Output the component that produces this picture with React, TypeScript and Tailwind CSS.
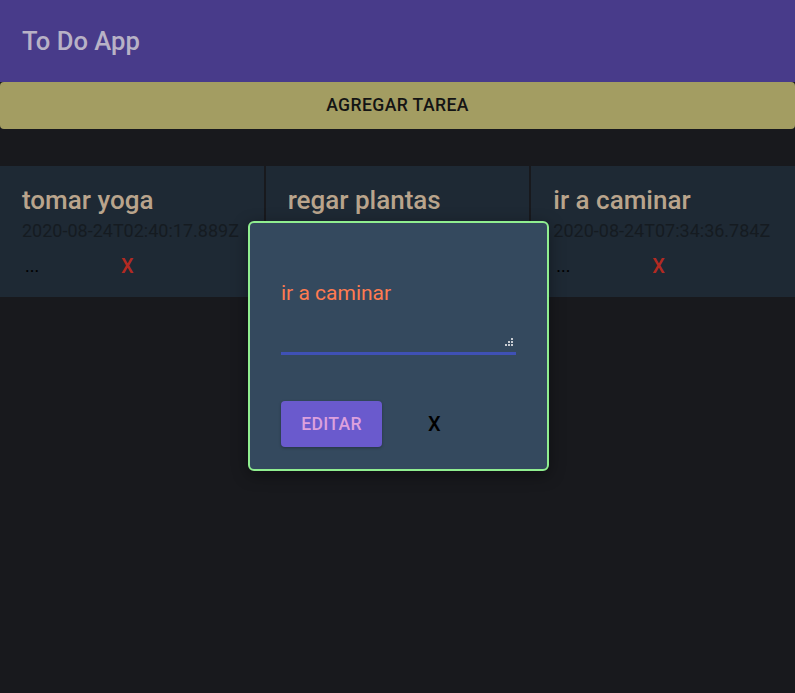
import { useState } from 'react'

const tasks = [
  { title: "tomar yoga", date: "2020-08-24T02:40:17.889Z" },
  { title: "regar plantas", date: "2020-08-24T05:12:08.431Z" },
  { title: "ir a caminar", date: "2020-08-24T07:34:36.784Z" }
];

const App = () => {
  const [text, setText] = useState("");

  return (
    <div className="relative min-h-[693px] bg-[#18191d] font-['Roboto',sans-serif]">
      <header className="h-[82px] flex items-center px-[22px] bg-[#483b8a]">
        <h1 className="text-[25.6px] font-medium text-[#b8b2c6]">To Do App</h1>
      </header>

      <button className="w-full h-[47px] rounded-[4px] bg-[#a39d62] text-[17.6px] font-medium tracking-[0.4px] text-[#141414]">
        AGREGAR TAREA
      </button>

      <div className="mt-[37px] grid grid-cols-3 gap-[2px]">
        {tasks.map((t) => (
          <div key={t.title} className="h-[131px] bg-[#1e2934] px-[22px] pt-[19px] overflow-hidden">
            <div className="text-[26px] font-medium text-[#b9a48c] leading-[30px] whitespace-nowrap">{t.title}</div>
            <div className="text-[18px] text-[#151b21] leading-[24px] mt-[4px] whitespace-nowrap">{t.date}</div>
            <div className="flex items-center mt-[11px] leading-[24px]">
              <span className="w-[99px] pl-[3px] text-[18px] text-black">...</span>
              <span className="text-[20px] font-medium text-[#b22a22]">X</span>
            </div>
          </div>
        ))}
      </div>

      <div className="absolute left-[248px] top-[221px] w-[301px] h-[250px] rounded-[6px] border-2 border-[#90ee90] bg-[#34495e] shadow-[0_4px_16px_rgba(0,0,0,0.4)] px-[31px] pt-[58px]">
        <div className="text-[21px] text-[#ff7b50] leading-[24px]">ir a caminar</div>
        <div className="relative mt-[17px] w-[235px] border-b-[3px] border-[#3f51b5]">
          <textarea
            value={text}
            onChange={(e) => setText(e.target.value)}
            className="block w-full h-[30px] bg-transparent outline-none resize-none text-[16px] text-white"
          />
          <svg className="absolute right-[3px] bottom-[6px]" width="8" height="8" viewBox="0 0 8 8">
            <rect x="6" y="0" width="2" height="2" fill="#c8ccd2" />
            <rect x="3" y="3" width="2" height="2" fill="#c8ccd2" />
            <rect x="6" y="3" width="2" height="2" fill="#c8ccd2" />
            <rect x="0" y="6" width="2" height="2" fill="#c8ccd2" />
            <rect x="3" y="6" width="2" height="2" fill="#c8ccd2" />
            <rect x="6" y="6" width="2" height="2" fill="#c8ccd2" />
          </svg>
        </div>
        <div className="flex items-center mt-[46px]">
          <button className="w-[101px] h-[46px] rounded-[4px] bg-[#6a5acd] text-[17.6px] font-medium text-[#dda0dd] tracking-[0.3px] shadow-[0_1px_3px_rgba(0,0,0,0.3)]">
            EDITAR
          </button>
          <span className="ml-[46px] text-[20px] font-medium text-black">X</span>
        </div>
      </div>
    </div>
  )
}

export default App
